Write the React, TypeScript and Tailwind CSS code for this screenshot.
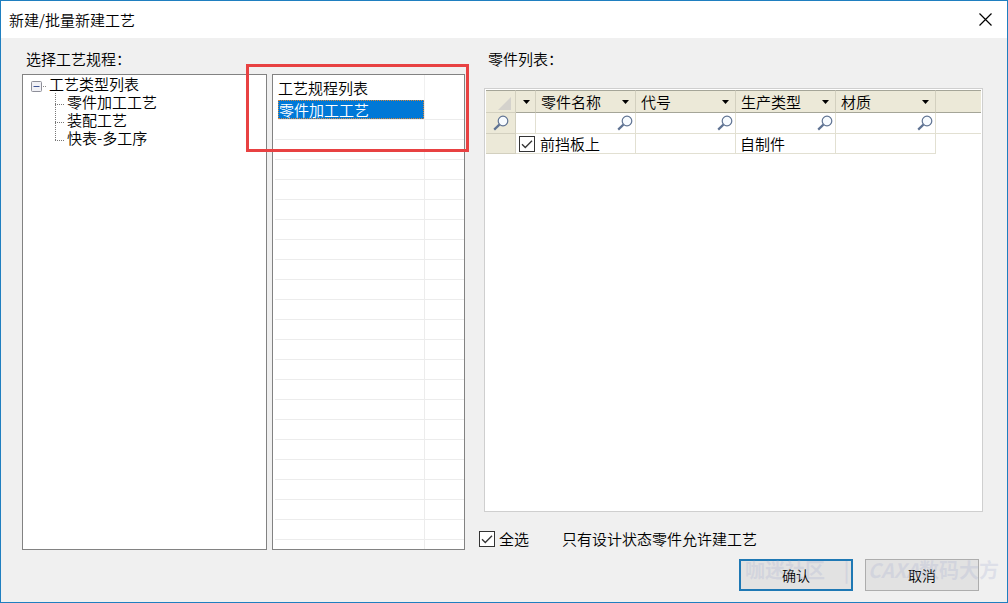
import { useState } from "react";

const treeItems = ["零件加工工艺", "装配工艺", "快表-多工序"];

const columns = ["零件名称", "代号", "生产类型", "材质"];

const parts = [{ cells: ["前挡板上", "", "自制件", ""] }];

const emptyRows = Array.from({ length: 21 }, (_, index) => index);

function SearchIcon() {
  return (
    <svg width="16" height="16" viewBox="0 0 16 16" fill="none" stroke="#5f7393">
      <circle cx="10" cy="6" r="4.8" fill="#f7fbff" strokeWidth="1.2" />
      <path d="M6.4 9.6 1.2 14.6" strokeWidth="2.2" />
    </svg>
  );
}

function SortArrow({ label }: { label: string }) {
  return (
    <button type="button" aria-label={label} className="flex h-5 w-5 shrink-0 items-center justify-center">
      <svg width="7" height="4" viewBox="0 0 7 4">
        <path d="M0 0h7L3.5 4z" fill="#000" />
      </svg>
    </button>
  );
}

function CheckBox({
  id,
  label,
  checked,
  onChange,
}: {
  id: string;
  label?: string;
  checked: boolean;
  onChange: (checked: boolean) => void;
}) {
  return (
    <span className="relative block h-4 w-4 shrink-0">
      <input
        id={id}
        type="checkbox"
        aria-label={label}
        checked={checked}
        onChange={(event) => onChange(event.target.checked)}
        className="block h-4 w-4 appearance-none border border-[#333] bg-white"
      />
      {checked && (
        <svg
          className="pointer-events-none absolute inset-0"
          width="16"
          height="16"
          viewBox="0 0 16 16"
          fill="none"
          stroke="#333"
          strokeWidth="1.3"
        >
          <path d="M3 8.2 6.3 11.5 13 4.8" />
        </svg>
      )}
    </span>
  );
}

function ProcessTree() {
  return (
    <div className="w-[245px] shrink-0 border border-[#828282] bg-white pl-2">
      <div className="flex h-[18px] items-center">
        <button type="button" aria-label="工艺类型列表" className="mt-1 block">
          <svg width="18" height="11" viewBox="0 0 18 11" fill="none">
            <rect x="0.5" y="0.5" width="10" height="10" rx="1" fill="#f1f1f6" stroke="#8e8f99" />
            <path d="M2.5 5.5h6" stroke="#3f5594" />
            <path d="M12 5.5h4" stroke="#888" strokeDasharray="1 1" />
          </svg>
        </button>
        <span>工艺类型列表</span>
      </div>
      <ul className="pl-6">
        {treeItems.map((item, index) => (
          <li key={item} className="flex h-[18px] items-center">
            <svg width="12" height="18" viewBox="0 0 12 18" stroke="#777" strokeDasharray="1 1">
              <path d={index === treeItems.length - 1 ? "M0.5 0v12" : "M0.5 0v18"} />
              <path d="M0 11.5h10" />
            </svg>
            <span>{item}</span>
          </li>
        ))}
      </ul>
    </div>
  );
}

function ProcessList() {
  return (
    <div className="flex w-[193px] shrink-0 flex-col border border-[#828282] bg-white pl-[5px]">
      <div className="flex h-[25px] items-center">
        <span className="w-[146px]">工艺规程列表</span>
        <span className="h-full border-l border-[#f0f0f0]" />
      </div>
      <div className="flex h-5 border-b border-[#ececec]">
        <span className="flex w-[146px] items-center border border-dotted border-[#d8873a] bg-[#0078d7] text-white">
          零件加工工艺
        </span>
        <span className="border-l border-[#ececec]" />
      </div>
      {emptyRows.map((row) => (
        <div key={row} className="-ml-[3px] flex h-5 border-b border-[#ececec] pl-[149px]">
          <span className="border-l border-[#ececec]" />
        </div>
      ))}
      <div className="flex flex-1 pl-[146px]">
        <span className="border-l border-[#ececec]" />
      </div>
    </div>
  );
}

function PartTable() {
  const [checked, setChecked] = useState(true);

  return (
    <table className="w-full table-fixed border-separate border-spacing-0 text-left">
      <colgroup>
        <col className="w-[30px]" />
        <col className="w-5" />
        {columns.map((column) => (
          <col key={column} className="w-[100px]" />
        ))}
        <col />
      </colgroup>
      <thead>
        <tr className="h-[23px]">
          <th className="border-y border-r border-t-[#a5a598] border-r-[#d3d0bf] border-b-[#d3d0bf] bg-[#ece9d8] p-0">
            <svg className="mt-1 ml-3" width="13" height="13" viewBox="0 0 13 13">
              <path d="M13 0v13H0z" fill="#d4d2cc" />
            </svg>
          </th>
          <th className="border-y border-r border-[#a5a598] border-r-[#d3d0bf] bg-[#ece9d8] p-0">
            <SortArrow label="选择" />
          </th>
          {columns.map((column) => (
            <th
              key={column}
              className="border-y border-r border-[#a5a598] border-r-[#d3d0bf] bg-[#ece9d8] p-0 font-[350]"
            >
              <div className="flex items-center justify-between pl-[5px]">
                {column}
                <SortArrow label={column} />
              </div>
            </th>
          ))}
          <th className="border-y border-[#a5a598] bg-[#ece9d8] p-0" />
        </tr>
      </thead>
      <tbody>
        <tr className="h-[21px]">
          <td className="border-r border-b border-[#d3d0bf] bg-[#ece9d8] p-0 pl-[7px]">
            <SearchIcon />
          </td>
          <td className="border-r border-b border-[#e2e0d2] p-0" />
          {columns.map((column) => (
            <td key={column} className="border-r border-b border-[#e2e0d2] p-0">
              <div className="flex items-center pr-0.5">
                <input aria-label={column} className="h-5 min-w-0 flex-1 bg-transparent px-1 outline-none" />
                <SearchIcon />
              </div>
            </td>
          ))}
          <td className="border-b border-[#e2e0d2] p-0" />
        </tr>
        {parts.map((part) => (
          <tr key={part.cells[0]} className="h-5">
            <td className="border-r border-b border-[#d3d0bf] bg-[#ece9d8] p-0" />
            <td className="border-b border-[#e2e0d2] p-0 pl-[3px]">
              <CheckBox id="part-0" label={part.cells[0]} checked={checked} onChange={setChecked} />
            </td>
            {part.cells.map((cell, index) => (
              <td key={columns[index]} className="border-r border-b border-[#e2e0d2] p-0 pl-1 leading-[19px]">
                {cell}
              </td>
            ))}
            <td className="p-0" />
          </tr>
        ))}
      </tbody>
    </table>
  );
}

export default function App() {
  const [all, setAll] = useState(true);

  return (
    <div className="flex min-h-screen flex-col border border-[#1f7fc0] bg-[#f0f0f0] font-['Noto_Sans_CJK_SC',sans-serif] text-[15px] leading-[18px] font-[350] text-black">
      <header className="flex h-[37px] items-center justify-between bg-white pr-[15px] pl-2">
        <h1 className="font-[350]">新建/批量新建工艺</h1>
        <button type="button" aria-label="关闭">
          <svg width="13" height="13" viewBox="0 0 13 13" fill="none" stroke="#000" strokeWidth="1.2">
            <path d="M0.5 0.5l12 12M12.5 0.5l-12 12" />
          </svg>
        </button>
      </header>

      <main className="flex flex-1 pr-6 pl-[21px]">
        <section className="relative flex flex-col pb-[52px]">
          <h2 className="flex h-9 items-center pt-[6px] pl-1 font-[350]">选择工艺规程：</h2>
          <div className="flex flex-1 gap-[5px]">
            <ProcessTree />
            <ProcessList />
          </div>
          <div className="pointer-events-none absolute top-[26px] -right-1 h-[88px] w-[223px] border-[3px] border-[#e84142]" />
        </section>

        <section className="ml-[14px] flex min-w-0 flex-1 flex-col">
          <h2 className="flex h-[50px] items-start pt-3 pl-[9px] font-[350]">零件列表：</h2>
          <div className="ml-[5px] flex-1 border border-[#cfcfcf] bg-white p-px">
            <PartTable />
          </div>
          <div className="flex h-[47px] items-center pt-[7px]">
            <CheckBox id="select-all" checked={all} onChange={setAll} />
            <label htmlFor="select-all" className="pl-1">
              全选
            </label>
            <p className="pl-[33px]">只有设计状态零件允许建工艺</p>
          </div>
          <div className="relative mr-1 flex justify-end gap-3 pb-[11px] text-sm">
            <button type="button" className="h-8 w-[114px] border-2 border-[#1e78b4] bg-[#e2e2e2]">
              确认
            </button>
            <button type="button" className="h-8 w-[114px] border border-[#adadad] bg-[#e2e2e2]">
              取消
            </button>
            <div className="pointer-events-none absolute top-0 -right-5 flex w-[254px] justify-between text-[20px] leading-[22px] font-bold whitespace-nowrap text-[#a4acd0]/25">
              <span>咖迷社区</span>
              <span>|</span>
              <span>
                <i>CAXA</i>数码大方
              </span>
            </div>
          </div>
        </section>
      </main>
    </div>
  );
}
